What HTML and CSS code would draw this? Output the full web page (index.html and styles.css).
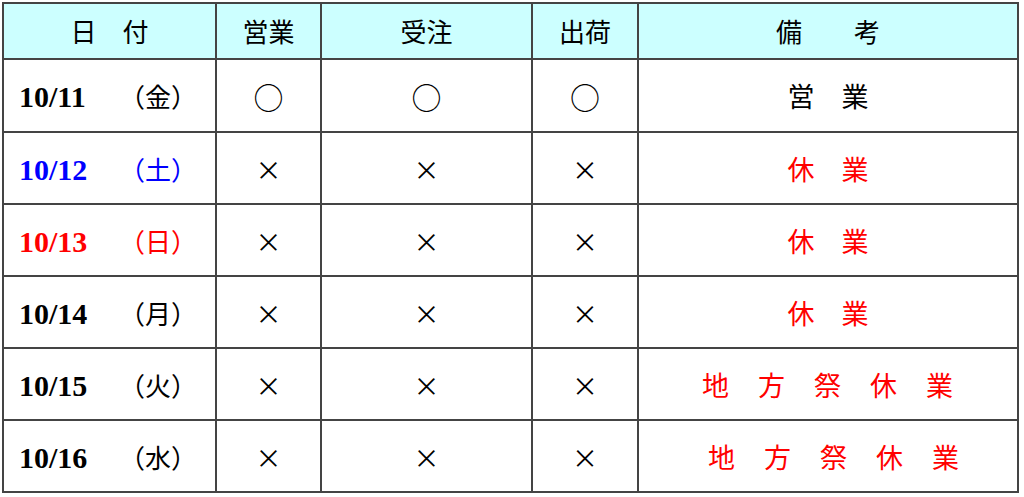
FILE: index.html
```html
<!DOCTYPE html>
<html lang="ja">
<head>
<meta charset="utf-8">
<link rel="stylesheet" href="styles.css">
</head>
<body>
<table class="sched">
  <colgroup>
    <col class="c-date"><col class="c-op"><col class="c-order"><col class="c-ship"><col class="c-note">
  </colgroup>
  <thead>
    <tr class="head">
      <th>日　付</th><th>営業</th><th>受注</th><th>出荷</th><th>備　　考</th>
    </tr>
  </thead>
  <tbody>
    <tr class="first">
      <td class="date"><span class="d">10/11</span><span class="w">（金）</span></td>
      <td class="mark circ">○</td><td class="mark circ">○</td><td class="mark circ">○</td>
      <td class="note">営　業</td>
    </tr>
    <tr>
      <td class="date blue"><span class="d">10/12</span><span class="w">（土）</span></td>
      <td class="mark">×</td><td class="mark">×</td><td class="mark">×</td>
      <td class="note red">休　業</td>
    </tr>
    <tr>
      <td class="date red"><span class="d">10/13</span><span class="w">（日）</span></td>
      <td class="mark">×</td><td class="mark">×</td><td class="mark">×</td>
      <td class="note red">休　業</td>
    </tr>
    <tr>
      <td class="date"><span class="d">10/14</span><span class="w">（月）</span></td>
      <td class="mark">×</td><td class="mark">×</td><td class="mark">×</td>
      <td class="note red">休　業</td>
    </tr>
    <tr>
      <td class="date"><span class="d">10/15</span><span class="w">（火）</span></td>
      <td class="mark">×</td><td class="mark">×</td><td class="mark">×</td>
      <td class="note red wide">地　方　祭　休　業</td>
    </tr>
    <tr>
      <td class="date"><span class="d">10/16</span><span class="w">（水）</span></td>
      <td class="mark">×</td><td class="mark">×</td><td class="mark">×</td>
      <td class="note red wide shift">地　方　祭　休　業</td>
    </tr>
  </tbody>
</table>
</body>
</html>
```

FILE: styles.css
```css
html, body {
  margin: 0;
  padding: 0;
  background: #ffffff;
}
body {
  padding: 2px;
  font-family: "Noto Sans CJK JP", "Noto Sans", sans-serif;
  color: #000;
}
.sched {
  border-collapse: collapse;
  table-layout: fixed;
  width: 1015px;
  border: 2px solid #444;
}
.c-date { width: 213px; }
.c-op { width: 105px; }
.c-order { width: 211px; }
.c-ship { width: 106px; }
.c-note { width: 380px; }

.sched th,
.sched td {
  border: 2px solid #444;
  padding: 0;
  text-align: center;
  vertical-align: middle;
  height: 70px;
}
.sched .head th {
  background: #ccffff;
  font-weight: normal;
  font-size: 26px;
  height: 54px;
  line-height: 30px;
}
.sched tr.first td { height: 71px; }

.sched td.date {
  text-align: left;
  padding-left: 15px;
  white-space: nowrap;
}
.d {
  display: inline-block;
  width: 100px;
  font-family: "Liberation Serif", "Times New Roman", serif;
  font-weight: bold;
  font-size: 30px;
}
.w {
  font-size: 26px;
}
.mark {
  font-size: 26px;
  padding-top: 2px;
}
.mark.circ {
  font-size: 30px;
}
.note {
  font-size: 27px;
  padding-top: 2px;
}
.note.wide {
  letter-spacing: 1px;
}
.note.shift {
  padding-left: 12px;
}
.blue { color: #0000ff; }
.red { color: #ff0000; }
```
